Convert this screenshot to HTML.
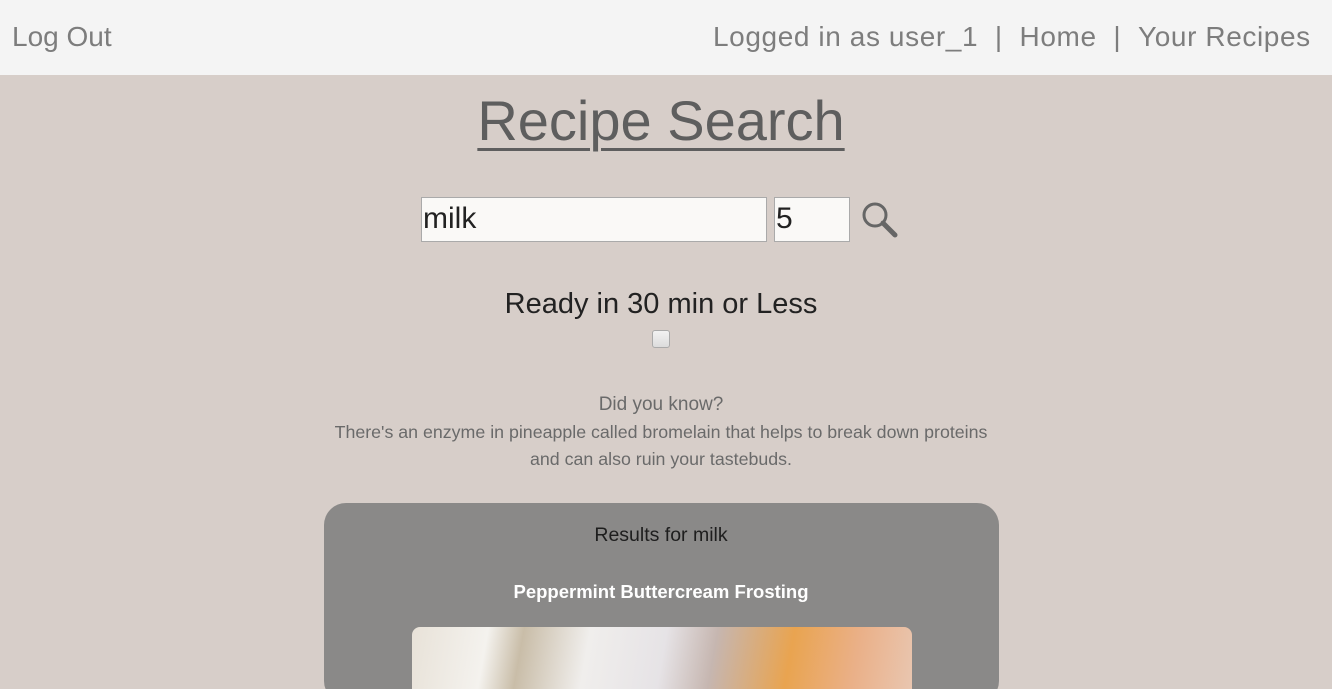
<!DOCTYPE html>
<html style="width:1332px;height:689px;overflow:hidden"><head><style>
*{box-sizing:border-box;margin:0;padding:0}
body{width:1332px;height:689px;overflow:hidden;background:#d7cec9;font-family:"Liberation Sans",sans-serif;position:relative}
.nav{position:absolute;left:0;top:0;width:1332px;height:75px;background:#f4f4f4;color:#7d7d7d;font-size:28px}
.nav span{position:absolute;top:21px;white-space:nowrap}
.title{position:absolute;top:88px;left:0;width:1322px;text-align:center;font-size:56px;color:#5e5e5e;text-decoration:underline;text-decoration-thickness:3px;text-underline-offset:8px}
.in{position:absolute;background:#faf9f7;border:1px solid #aaa;font-size:30px;color:#222;padding-left:1px;line-height:42px}
.ready{position:absolute;top:288px;width:1322px;text-align:center;font-size:29px;color:#222}
.cb{position:absolute;left:652px;top:330px;width:18px;height:18px;border:1px solid #aaa;border-radius:3px;background:linear-gradient(#f2f2f2,#dcdcdc)}
.dyk{position:absolute;width:1322px;text-align:center;color:#6a6a6a}
.card{position:absolute;left:324px;top:503px;width:675px;height:200px;background:#8a8988;border-radius:22px}
.img{position:absolute;left:412px;top:627px;width:500px;height:62px;border-radius:8px 8px 0 0;background:linear-gradient(100deg,#e8e2d8 0%,#f4f2ee 15%,#c9bda8 22%,#f0eeec 35%,#e6e3e6 50%,#c6b6b0 60%,#e9a450 75%,#eab088 88%,#e9c6b0 100%)}
</style></head><body>
<div class="nav"><span style="left:12px">Log Out</span><span style="left:713px;letter-spacing:0.6px">Logged in as user_1 &nbsp;| &nbsp;Home &nbsp;| &nbsp;Your Recipes</span></div>
<div class="title">Recipe Search</div>
<div class="in" style="left:421px;top:197px;width:346px;height:45px">milk</div>
<div class="in" style="left:774px;top:197px;width:76px;height:45px">5</div>
<svg style="position:absolute;left:860px;top:200px" width="40" height="40" viewBox="0 0 40 40"><circle cx="15" cy="15" r="11" fill="none" stroke="#666" stroke-width="3"/><line x1="23" y1="23" x2="35" y2="35" stroke="#666" stroke-width="5" stroke-linecap="round"/></svg>
<div class="ready">Ready in 30 min or Less</div>
<div class="cb"></div>
<div class="dyk" style="top:394px;font-size:19px">Did you know?</div>
<div class="dyk" style="top:419px;font-size:17.8px;line-height:27px">There's an enzyme in pineapple called bromelain that helps to break down proteins<br>and can also ruin your tastebuds.</div>
<div class="card"></div>
<div class="dyk" style="top:524px;font-size:19.5px;color:#1e1e1e">Results for milk</div>
<div class="dyk" style="top:581px;font-size:18.5px;color:#fff;font-weight:bold">Peppermint Buttercream Frosting</div>
<div class="img"></div>
</body></html>
